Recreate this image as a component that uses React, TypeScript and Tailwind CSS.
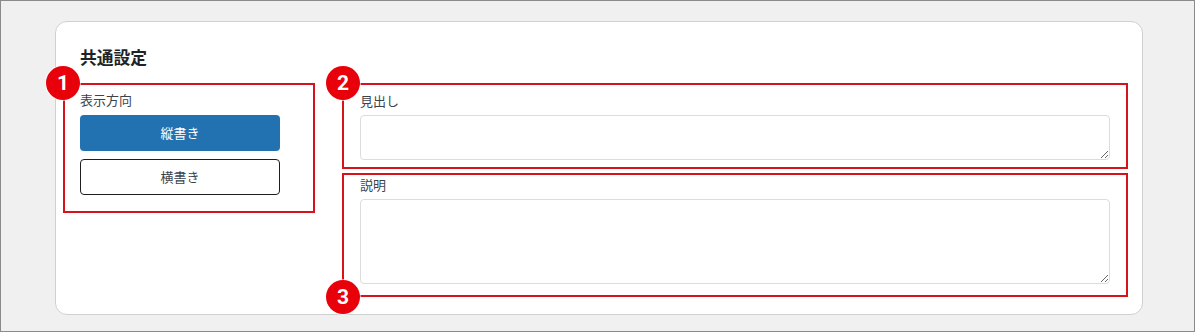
import React from "react";

const Badge = ({ n, className }: { n: string; className: string }) => (
  <div
    className={
      "absolute w-[34px] h-[34px] rounded-full bg-[#e8000b] text-white flex items-center justify-center text-[21px] font-bold leading-none shadow-[0_0_0_1px_rgba(255,255,255,0.6)] " +
      className
    }
    style={{ fontFamily: "Roboto, 'Liberation Sans', sans-serif" }}
  >
    {n}
  </div>
);

export default function App() {
  return (
    <div
      className="w-[1195px] h-[332px] bg-[#f0f0f0] border border-[#8a8a8a] overflow-hidden"
      style={{ fontFamily: "'Noto Sans CJK JP', 'Noto Sans', sans-serif" }}
    >
      <div className="ml-[54px] mt-[20px] w-[1088px] h-[294px] bg-white border border-[#d0d0d0] rounded-[12px] pt-[23px]">
        <div className="pl-[24px] text-[16.75px] leading-[24px] font-bold text-[#1d2327]">共通設定</div>
        <div className="flex pl-[7px] mt-[14px] gap-[27px]">
          <div className="relative w-[252px] h-[130px] border-2 border-[#d8121a] pl-[15px] pt-[6px]">
            <Badge n="1" className="left-[-19px] top-[-19px]" />
            <div className="text-[13px] leading-[18px] text-[#3c434a]">表示方向</div>
            <button className="mt-[6px] w-[200px] h-[36px] rounded-[4px] bg-[#2271b1] text-white text-[13px] flex items-center justify-center">
              縦書き
            </button>
            <button className="mt-[8px] w-[200px] h-[36px] rounded-[4px] border border-[#1e1e1e] bg-white text-[#3c434a] text-[13px] flex items-center justify-center">
              横書き
            </button>
          </div>
          <div className="flex flex-col gap-[4px]">
            <div className="relative w-[786px] h-[86px] border-2 border-[#d8121a] pl-[16px] pt-[7px]">
              <Badge n="2" className="left-[-18px] top-[-19px]" />
              <div className="text-[13px] leading-[18px] text-[#3c434a]">見出し</div>
              <textarea className="block mt-[5px] w-[750px] h-[45px] border border-[#dcdcde] rounded-[4px] resize-y outline-none" />
            </div>
            <div className="relative w-[786px] h-[124px] border-2 border-[#d8121a] pl-[16px] pt-[1px]">
              <Badge n="3" className="left-[-18px] bottom-[-19px]" />
              <div className="text-[13px] leading-[18px] text-[#3c434a]">説明</div>
              <textarea className="block mt-[5px] w-[750px] h-[85px] border border-[#dcdcde] rounded-[4px] resize-y outline-none" />
            </div>
          </div>
        </div>
      </div>
    </div>
  );
}
